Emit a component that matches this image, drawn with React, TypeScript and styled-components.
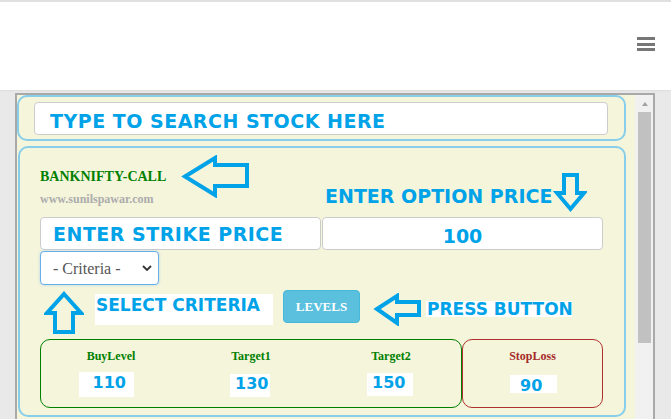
import React from 'react'
import styled, { createGlobalStyle } from 'styled-components'

const BLUE = '#00a2e8'
const SKY = '#87ceeb'
const CAPTION_FONT = "'DejaVu Sans', Verdana, sans-serif"

const GlobalStyle = createGlobalStyle`
  html, body {
    margin: 0;
    padding: 0;
    background: #e9e9e9;
    overflow: hidden;
  }
  body {
    font-family: 'Liberation Serif', 'Times New Roman', serif;
  }
`

const Header = styled.header`
  height: 90px;
  box-sizing: border-box;
  background: #fff;
  border-top: 2px solid #e0e0e0;
  box-shadow: 0 1px 2px rgba(0, 0, 0, 0.06);
  display: flex;
  justify-content: flex-end;
  padding: 35px 16px 0 0;
`
const MenuButton = styled.div`
  display: flex;
  flex-direction: column;
  gap: 2.5px;
  span {
    display: block;
    width: 18px;
    height: 3px;
    background: #777;
  }
`

const Stage = styled.div`
  padding: 3px 0 0 15px;
`
const Frame = styled.div`
  width: 640px;
  height: 340px;
  box-sizing: border-box;
  border: 2px solid #a9a9a9;
  border-bottom: 0;
  display: flex;
`
const Content = styled.div`
  flex: 1;
  background: #f5f5dc;
  display: flex;
  flex-direction: column;
`
const Scrollbar = styled.div`
  width: 18px;
  flex: none;
  background: #f1f1f1;
  display: flex;
  flex-direction: column;
`
const ScrollUp = styled.div`
  height: 17px;
  display: flex;
  align-items: center;
  justify-content: center;
  padding-left: 1px;
  &::before {
    content: '';
    border-left: 3.5px solid transparent;
    border-right: 3.5px solid transparent;
    border-bottom: 4px solid #a3a3a3;
  }
`
const ScrollThumb = styled.div`
  width: 13px;
  height: 231px;
  margin-left: 3px;
  background: #c1c1c1;
`

const SearchPanel = styled.div`
  width: 609px;
  box-sizing: border-box;
  border: 2px solid ${SKY};
  border-radius: 10px;
  padding: 5px 16px 4px 15px;
`
const BlueField = styled.input<{ $pl?: number; $pt?: number; $align?: string; $ls?: number }>`
  display: block;
  width: 100%;
  height: 33px;
  box-sizing: border-box;
  margin: 0;
  border: 1px solid #ccc;
  border-radius: 4px;
  background: #fff;
  outline: none;
  padding: ${({ $pt }) => $pt ?? 0}px 0 0 ${({ $pl }) => $pl ?? 0}px;
  text-align: ${({ $align }) => $align ?? 'left'};
  font-family: ${CAPTION_FONT};
  font-weight: 700;
  font-size: 19px;
  letter-spacing: ${({ $ls }) => $ls ?? 0}px;
  color: ${BLUE};
`

const MainPanel = styled.div`
  width: 608px;
  box-sizing: border-box;
  margin: 5px 0 0 1px;
  border: 2px solid ${SKY};
  border-radius: 10px;
  padding: 0 21px 7px 20px;
`
const TopRow = styled.div`
  height: 69px;
  display: grid;
  grid-template-columns: 1fr 1fr;
  column-gap: 1px;
`
const LeftHead = styled.div`
  padding-top: 7px;
  display: flex;
  flex-direction: column;
`
const TitleRow = styled.div`
  height: 43px;
  display: flex;
  align-items: center;
`
const Title = styled.div`
  font-weight: 700;
  font-size: 14px;
  line-height: 16px;
  color: #008000;
`
const SiteUrl = styled.div`
  margin-top: -6px;
  font-weight: 700;
  font-size: 12px;
  line-height: 14px;
  color: #acacac;
`
const RightHead = styled.div`
  padding: 25px 0 0 3px;
  display: flex;
  align-items: flex-start;
`
const OptionLabel = styled.div`
  margin-top: 12px;
  font-family: ${CAPTION_FONT};
  font-weight: 700;
  font-size: 19px;
  color: ${BLUE};
  white-space: nowrap;
`

const InputRow = styled.div`
  display: grid;
  grid-template-columns: 1fr 1fr;
  column-gap: 1px;
`

const SelectWrap = styled.div`
  position: relative;
  width: 119px;
  height: 34px;
  margin-top: 1px;
  svg {
    position: absolute;
    right: 7px;
    top: 14px;
    pointer-events: none;
  }
`
const CriteriaSelect = styled.select`
  width: 100%;
  height: 100%;
  appearance: none;
  box-sizing: border-box;
  border: 1px solid #66afe9;
  border-radius: 4px;
  box-shadow: 0 0 3px rgba(102, 175, 233, 0.45);
  background: #fff;
  padding: 0 0 0 12px;
  font-family: 'Liberation Serif', serif;
  font-size: 16px;
  color: #555;
  outline: none;
`

const ActionRow = styled.div`
  margin-top: 5px;
  height: 43px;
  display: flex;
  align-items: flex-start;
`
const Callout = styled.div<{ $w: number; $h: number; $pt: number; $ml: number; $mt: number }>`
  flex: none;
  width: ${({ $w }) => $w}px;
  height: ${({ $h }) => $h}px;
  box-sizing: border-box;
  margin: ${({ $mt }) => $mt}px 0 0 ${({ $ml }) => $ml}px;
  padding: ${({ $pt }) => $pt}px 0 0 1px;
  background: #fff;
  font-family: ${CAPTION_FONT};
  font-weight: 700;
  font-size: 17px;
  line-height: 16px;
  color: ${BLUE};
  white-space: nowrap;
`
const LevelsButton = styled.button`
  flex: none;
  width: 77px;
  height: 33px;
  margin-left: 10px;
  box-sizing: border-box;
  border: 1px solid #46b8da;
  border-radius: 4px;
  background: #5bc0de;
  color: #fff;
  font-family: 'Liberation Serif', serif;
  font-weight: 700;
  font-size: 13px;
  padding: 0;
`

const Results = styled.div`
  margin-top: 6px;
  height: 69px;
  display: flex;
`
const ResultBox = styled.div<{ $w: number; $border: string; $cols: number }>`
  width: ${({ $w }) => $w}px;
  box-sizing: border-box;
  border: 1px solid ${({ $border }) => $border};
  border-radius: 10px;
  display: grid;
  grid-template-columns: repeat(${({ $cols }) => $cols}, 1fr);
`
const Cell = styled.div`
  display: flex;
  flex-direction: column;
  align-items: center;
  padding-top: 9px;
`
const CellLabel = styled.div<{ $color: string }>`
  font-weight: 700;
  font-size: 12px;
  line-height: 14px;
  color: ${({ $color }) => $color};
`
const ValueBox = styled.div<{ $w: number; $h: number; $pl: number; $pt: number; $mt: number; $dx: number }>`
  width: ${({ $w }) => $w}px;
  height: ${({ $h }) => $h}px;
  box-sizing: border-box;
  margin-top: ${({ $mt }) => $mt}px;
  margin-left: ${({ $dx }) => ($dx > 0 ? 2 * $dx : 0)}px;
  margin-right: ${({ $dx }) => ($dx < 0 ? -2 * $dx : 0)}px;
  padding: ${({ $pt }) => $pt}px 0 0 ${({ $pl }) => $pl}px;
  background: #fff;
  font-family: ${CAPTION_FONT};
  font-weight: 700;
  font-size: 16px;
  line-height: 16px;
  color: ${BLUE};
  white-space: nowrap;
`

interface ArrowProps {
  w: number
  h: number
  points: string
  className?: string
}

const OutlineArrow: React.FC<ArrowProps> = ({ w, h, points, className }) => (
  <svg className={className} width={w} height={h} viewBox={`0 0 ${w} ${h}`}>
    <polygon points={points} fill="none" stroke={BLUE} strokeWidth={4} strokeLinejoin="miter" />
  </svg>
)

const TitleArrow = styled(OutlineArrow)`
  flex: none;
  margin-left: 15px;
`
const DownArrow = styled(OutlineArrow)`
  flex: none;
  margin-left: 1px;
`
const UpArrow = styled(OutlineArrow)`
  flex: none;
  margin-left: 4px;
`
const PressArrow = styled(OutlineArrow)`
  flex: none;
  margin: 3px 0 0 12px;
`

const levels = [
  { label: 'BuyLevel', value: '110', w: 55, h: 25, pl: 14, pt: 3, mt: 9, dx: -5 },
  { label: 'Target1', value: '130', w: 40, h: 23, pl: 5, pt: 2, mt: 11, dx: -1 },
  { label: 'Target2', value: '150', w: 46, h: 23, pl: 5, pt: 2, mt: 10, dx: -1 },
]
const stopLoss = { label: 'StopLoss', value: '90', w: 47, h: 18, pl: 10, pt: 3, mt: 12, dx: 1 }

const App: React.FC = () => {
  return (
    <>
      <GlobalStyle />
      <Header>
        <MenuButton>
          <span />
          <span />
          <span />
        </MenuButton>
      </Header>
      <Stage>
        <Frame>
          <Content>
            <SearchPanel>
              <BlueField readOnly value="TYPE TO SEARCH STOCK HERE" $pl={15} $pt={5} $ls={0.5} />
            </SearchPanel>
            <MainPanel>
              <TopRow>
                <LeftHead>
                  <TitleRow>
                    <Title>BANKNIFTY-CALL</Title>
                    <TitleArrow w={68} h={43} points="4,21.5 34,3 34,10 66,10 66,31 34,31 34,40" />
                  </TitleRow>
                  <SiteUrl>www.sunilspawar.com</SiteUrl>
                </LeftHead>
                <RightHead>
                  <OptionLabel>ENTER OPTION PRICE</OptionLabel>
                  <DownArrow w={34} h={41} points="11,2 24,2 24,20 31,20 17.5,36 4,20 11,20" />
                </RightHead>
              </TopRow>
              <InputRow>
                <BlueField readOnly value="ENTER STRIKE PRICE" $pl={12} $ls={0.5} />
                <BlueField readOnly value="100" $align="center" $pt={5} />
              </InputRow>
              <SelectWrap>
                <CriteriaSelect defaultValue="">
                  <option value="">- Criteria -</option>
                </CriteriaSelect>
                <svg width="10" height="6" viewBox="0 0 10 6">
                  <polyline points="1,1 5,5 9,1" fill="none" stroke="#333" strokeWidth="1.8" />
                </svg>
              </SelectWrap>
              <ActionRow>
                <UpArrow w={40} h={45} points="20,4 37,23 29,23 29,42 11,42 11,23 3,23" />
                <Callout $w={178} $h={31} $pt={3} $ml={11} $mt={4}>
                  SELECT CRITERIA
                </Callout>
                <LevelsButton>LEVELS</LevelsButton>
                <PressArrow w={50} h={33} points="5,16 25,3 25,9 47,9 47,22 25,22 25,30" />
                <Callout $w={146} $h={16} $pt={0} $ml={4} $mt={11}>
                  PRESS BUTTON
                </Callout>
              </ActionRow>
              <Results>
                <ResultBox $w={422} $border="#008000" $cols={3}>
                  {levels.map((l) => (
                    <Cell key={l.label}>
                      <CellLabel $color="#008000">{l.label}</CellLabel>
                      <ValueBox $w={l.w} $h={l.h} $pl={l.pl} $pt={l.pt} $mt={l.mt} $dx={l.dx}>
                        {l.value}
                      </ValueBox>
                    </Cell>
                  ))}
                </ResultBox>
                <ResultBox $w={141} $border="#b03030" $cols={1}>
                  <Cell>
                    <CellLabel $color="#a52a2a">{stopLoss.label}</CellLabel>
                    <ValueBox
                      $w={stopLoss.w}
                      $h={stopLoss.h}
                      $pl={stopLoss.pl}
                      $pt={stopLoss.pt}
                      $mt={stopLoss.mt}
                      $dx={stopLoss.dx}
                    >
                      {stopLoss.value}
                    </ValueBox>
                  </Cell>
                </ResultBox>
              </Results>
            </MainPanel>
          </Content>
          <Scrollbar>
            <ScrollUp />
            <ScrollThumb />
          </Scrollbar>
        </Frame>
      </Stage>
    </>
  )
}

export default App
